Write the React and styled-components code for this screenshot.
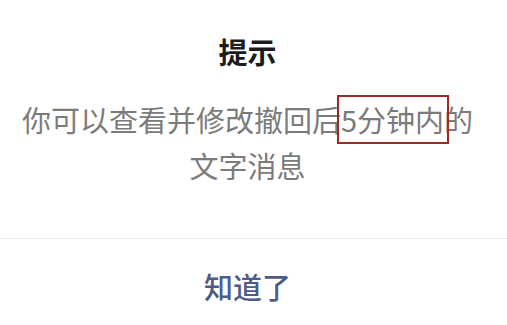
import styled, { createGlobalStyle } from 'styled-components';

const GlobalStyle = createGlobalStyle`
    html, body {
        margin: 0;
        padding: 0;
        background: #ffffff;
    }
    body {
        font-family: "Noto Sans CJK SC", "Noto Sans", sans-serif;
    }
`;

const Dialog = styled.div`
    width: 507px;
    height: 325px;
    display: flex;
    flex-direction: column;
    background: #ffffff;
    overflow: hidden;
`;

const Content = styled.div`
    display: flex;
    flex-direction: column;
    align-items: center;
    padding: 31px 12px 50px 0;
    border-bottom: 1px solid #ececec;
`;

const Title = styled.h2`
    margin: 0;
    font-size: 29px;
    line-height: 40px;
    font-weight: 700;
    color: #1c1c1c;
`;

const Message = styled.p`
    margin: 25px 0 0;
    font-size: 29px;
    line-height: 46px;
    color: #7b7b7b;
    text-align: center;
    white-space: nowrap;
`;

const Highlight = styled.span`
    position: relative;

    &::after {
        content: '';
        position: absolute;
        left: -4px;
        right: -5px;
        top: -3px;
        bottom: -4px;
        border: 2px solid #9c2b26;
    }
`;

const ConfirmButton = styled.button`
    flex: 1;
    border: none;
    background: none;
    font-family: inherit;
    font-size: 29px;
    font-weight: 500;
    color: #4d5b86;
    padding: 8px 12px 0 0;
    cursor: pointer;
`;

function App() {
    return (
        <>
            <GlobalStyle />
            <Dialog>
                <Content>
                    <Title>提示</Title>
                    <Message>
                        你可以查看并修改撤回后<Highlight>5分钟内</Highlight>的
                        <br />
                        文字消息
                    </Message>
                </Content>
                <ConfirmButton>知道了</ConfirmButton>
            </Dialog>
        </>
    );
}

export default App;
